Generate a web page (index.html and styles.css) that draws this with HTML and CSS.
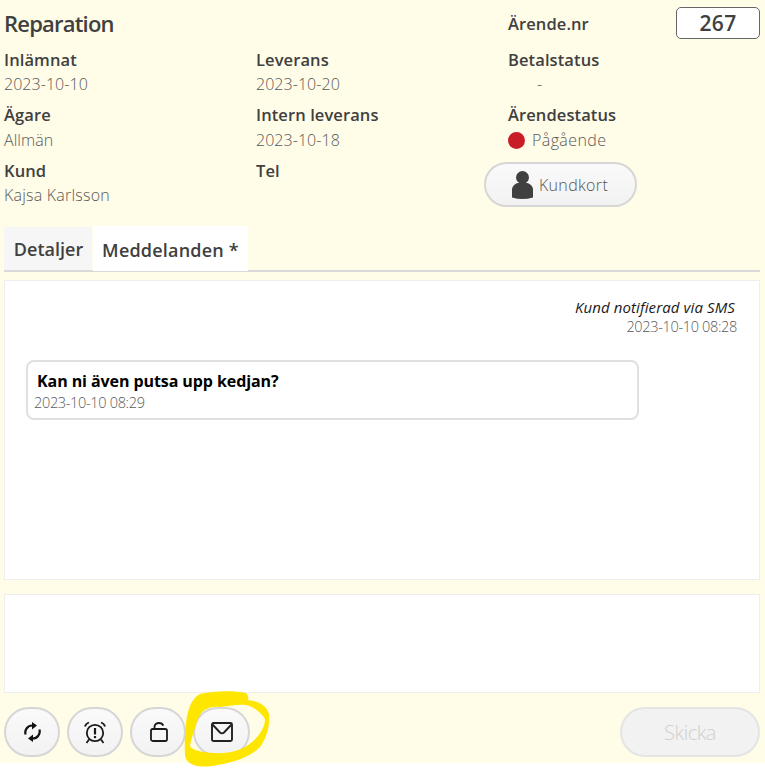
FILE: index.html
```html
<!DOCTYPE html>
<html lang="sv">
<head>
<meta charset="utf-8">
<title>Reparation</title>
<link rel="stylesheet" href="styles.css">
</head>
<body>
<div class="page">
  <header class="info">
    <h1 class="title">Reparation</h1>
    <div></div>
    <div class="case"><span class="label">Ärende.nr</span><span class="case-no">267</span></div>

    <div class="cell"><div class="label">Inlämnat</div><div class="value">2023-10-10</div></div>
    <div class="cell"><div class="label">Leverans</div><div class="value">2023-10-20</div></div>
    <div class="cell"><div class="label">Betalstatus</div><div class="value dash">-</div></div>

    <div class="cell"><div class="label">Ägare</div><div class="value low">Allmän</div></div>
    <div class="cell"><div class="label">Intern leverans</div><div class="value low">2023-10-18</div></div>
    <div class="cell"><div class="label">Ärendestatus</div><div class="value low status"><span class="dot"></span>Pågående</div></div>

    <div class="cell"><div class="label">Kund</div><div class="value wide">Kajsa Karlsson</div></div>
    <div class="cell"><div class="label">Tel</div></div>
    <div class="cell card-cell">
      <button class="btn card-btn">
        <svg width="21" height="28" viewBox="0 0 21 28"><circle cx="10.500" cy="6.500" r="6.500" fill="#404040"/><path d="M0 26.500V19c0-4 3-6.500 6-7h9c3 .5 6 3 6 7v7.500c-7 2-14 2-21 0z" fill="#404040"/></svg>
        Kundkort
      </button>
    </div>
  </header>

  <nav class="tabs">
    <div class="tab">Detaljer</div>
    <div class="tab active">Meddelanden *</div>
  </nav>

  <section class="messages">
    <div class="note">
      <div class="note-text">Kund notifierad via SMS</div>
      <div class="stamp">2023-10-10 08:28</div>
    </div>
    <div class="bubble">
      <div class="bubble-text">Kan ni även putsa upp kedjan?</div>
      <div class="stamp">2023-10-10 08:29</div>
    </div>
  </section>

  <div class="compose"></div>

  <footer class="actions">
    <button class="btn round" aria-label="Synkronisera">
      <svg width="17" height="20" viewBox="0 0 17 20" fill="none" stroke="#111" stroke-width="2.200"><path d="M1.600 12.500A7 7 0 0 1 8.500 3.500"/><path d="M15.400 7.500A7 7 0 0 1 8.500 16.500"/><path d="M8 0L13 3.500 8 7.500z" fill="#111" stroke="none"/><path d="M9 12.500L4 16.500 9 20z" fill="#111" stroke="none"/></svg>
    </button>
    <button class="btn round" aria-label="Påminnelse">
      <svg width="22" height="23" viewBox="0 0 22 23" fill="none" stroke="#1a1a1a" stroke-width="1.800"><circle cx="11" cy="12" r="8.200"/><path d="M11 7v6.500" stroke-width="2.200"/><path d="M11 15v2.200" stroke-width="2.200"/><path d="M1 5.500C1.500 3.500 3 2 5 1.500M21 5.500C20.500 3.500 19 2 17 1.500M5 18.500l-2.500 3.500M17 18.500l2.500 3.500"/></svg>
    </button>
    <button class="btn round lock" aria-label="Lås">
      <svg width="18" height="20" viewBox="0 0 18 20" fill="none" stroke="#1a1a1a" stroke-width="1.800"><rect x="1" y="7" width="16" height="12" rx="1.800"/><path d="M4.500 7V4.800C4.500 2.500 6.500 1 9 1c2 0 3.600 1 4.300 2.600"/></svg>
    </button>
    <button class="btn round mail" aria-label="Meddelande">
      <svg width="22" height="20" viewBox="0 0 22 20" fill="none" stroke="#222" stroke-width="1.900"><rect x="1" y="1" width="20" height="18" rx="1.500"/><path d="M1.500 2.500L9 10.500c1 1 3 1 4 0l7.500-8"/></svg>
    </button>
    <button class="btn send" disabled>Skicka</button>
  </footer>

  <svg class="scribble" width="95" height="88" viewBox="0 0 95 88"><path fill="#ffe600" fill-rule="evenodd" d="M20 9C30 6 55 5 66 8C68 10 69 13 68 15C78 16 88 21 89 30C90 42 86 54 80 62C68 74 50 78 32 81C18 83 7 80 5 71C4 50 6 30 10 21C12 16 16 11 20 9ZM40 22C28 21 21 26 18 34C15 42 12 52 10 60C10 64 18 67 33 68C50 69 63 65 72 57C80 50 85 42 85 34C81 27 74 22 66 20C56 19 47 22 40 22Z"/></svg>
</div>
</body>
</html>
```
FILE: styles.css
```css
* { box-sizing: border-box; }
html, body { margin: 0; padding: 0; background: #fff; }
body {
  font-family: "Open Sans", "Noto Sans", sans-serif;
  color: #404040;
  font-size: 16px;
  min-height: 773px;
}
.page {
  position: relative;
  height: 763px;
  background: #fffce8;
  padding: 0 5px 0 4px;
}
.info {
  display: grid;
  grid-template-columns: 252px 252px 1fr;
  grid-template-rows: 48px 55px 56px 1fr;
  height: 226px;
}
.title { margin: 0; font-size: 22px; font-weight: 600; line-height: 46px; letter-spacing: -.8px; }
.case { display: flex; justify-content: space-between; align-items: flex-start; padding-top: 7px; }
.case .label { line-height: 34px; }
.case-no {
  width: 84px; height: 32px;
  background: #fff;
  border: 1px solid #666;
  border-radius: 5px;
  text-align: center;
  font-size: 21px; font-weight: 600; line-height: 30px;
  letter-spacing: .3px;
}
.label { font-weight: 600; font-size: 16.500px; line-height: 24px; letter-spacing: .1px; }
.value { font-size: 16px; line-height: 24px; color: #595959; letter-spacing: .05px; font-weight: 300; }
.low { margin-top: 1px; }
.wide { letter-spacing: .22px; }
.dash { padding-left: 29px; }
.status { display: flex; align-items: center; letter-spacing: .4px; }
.dot { width: 17px; height: 17px; border-radius: 50%; background: #c91d28; margin-right: 7px; }
.btn {
  font-family: inherit;
  background: linear-gradient(#fafafa, #f2f2f2);
  border: 2px solid #d6d6d6;
  color: #404040;
  padding: 0;
  display: inline-flex; align-items: center; justify-content: center;
}
.card-cell { margin-left: -24px; padding-top: 3px; }
.card-btn {
  width: 153px; height: 45px; border-radius: 23px;
  font-size: 16px; gap: 6px; color: #555; font-weight: 300; letter-spacing: .35px;
  padding-right: 1px;
}
.tabs { display: flex; height: 46px; border-bottom: 2px solid #d9d9d9; align-items: flex-start; }
.tab {
  height: 43px; margin-top: 1px;
  width: 88px; text-align: center;
  background: #f6f6f6;
  font-size: 18px; font-weight: 600; line-height: 44px; letter-spacing: 0;
  padding-left: 1px;
}
.tab.active { margin-top: 0; height: 45px; width: 155px; margin-left: 1px; background: #fff; line-height: 48px; letter-spacing: .2px; padding-left: 0; }
.messages {
  margin-top: 8px;
  height: 300px;
  background: #fff;
  border: 1px solid #eee;
  padding: 16px 22px 0 21px;
}
.note { text-align: right; }
.note-text { font-style: italic; font-size: 15px; line-height: 20px; color: #1a1a1a; padding-right: 2px; letter-spacing: .1px; }
.stamp { font-size: 14.500px; line-height: 20px; color: #595959; letter-spacing: -.33px; font-weight: 300; }
.bubble {
  margin-top: 23px;
  width: 613px; height: 60px;
  border: 2px solid #e0e0e0;
  border-radius: 8px;
  padding: 8px 6px;
}
.bubble-text { font-weight: 700; font-size: 16px; line-height: 22px; color: #000; padding-left: 3px; letter-spacing: -.08px; }
.bubble .stamp { margin-top: 1px; }
.compose { margin-top: 14px; height: 99px; background: #fff; border: 1px solid #eee; }
.actions { display: flex; gap: 7px; margin-top: 14px; }
.round { width: 56px; height: 50px; border-radius: 25px; }
.lock { padding-left: 2px; }
.mail { width: 57px; padding-left: 1px; }
.send {
  margin-left: auto; width: 140px; height: 50px; border-radius: 25px;
  background: #f2f2f2; border-color: #e4e4e4; color: #d0d0d0;
  font-size: 20px; letter-spacing: -.5px; font-weight: 300;
}
.scribble { position: absolute; left: 180px; top: 685px; }
```
